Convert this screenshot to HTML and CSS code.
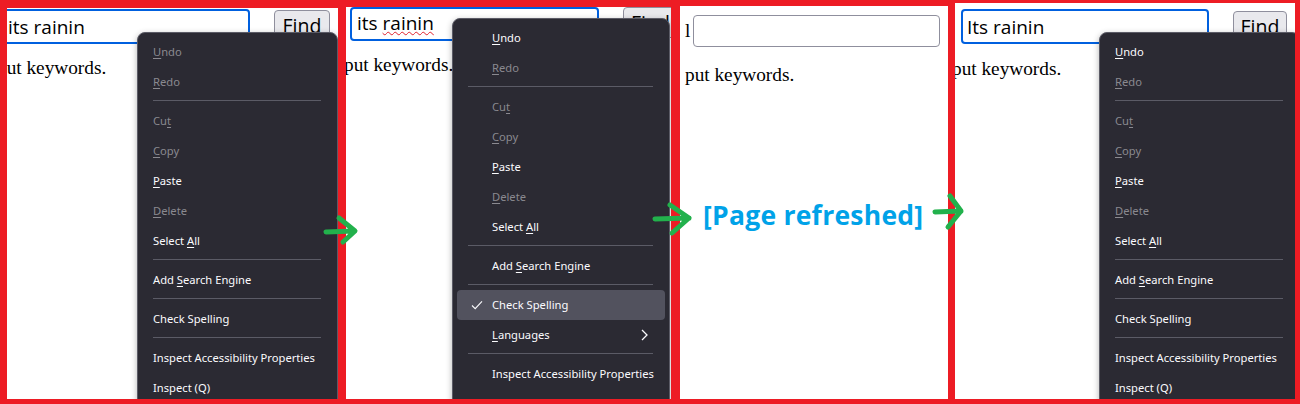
FILE: index.html
```html
<!DOCTYPE html>
<html>
<head>
<meta charset="utf-8">
<title>Spell check steps</title>
<link rel="stylesheet" href="styles.css">
</head>
<body>
<div class="strip">

	<section class="panel p1">
		<div class="bar">
			<div class="field">its rainin</div>
			<div class="find">Find</div>
		</div>
		<p class="hint">put keywords.</p>
		<ul class="menu">
			<li class="item off"><u>U</u>ndo</li>
			<li class="item off"><u>R</u>edo</li>
			<li class="sep"></li>
			<li class="item off">Cu<u>t</u></li>
			<li class="item off"><u>C</u>opy</li>
			<li class="item"><u>P</u>aste</li>
			<li class="item off"><u>D</u>elete</li>
			<li class="item">Select <u>A</u>ll</li>
			<li class="sep"></li>
			<li class="item">Add <u>S</u>earch Engine</li>
			<li class="sep"></li>
			<li class="item">Check Spelling</li>
			<li class="sep"></li>
			<li class="item">Inspect Accessibility Properties</li>
			<li class="item">Inspect (Q)</li>
		</ul>
	</section>

	<section class="panel p2">
		<div class="bar">
			<div class="field">its <span class="miss">rainin</span></div>
			<div class="find">Find</div>
		</div>
		<p class="hint">put keywords.</p>
		<ul class="menu">
			<li class="item"><u>U</u>ndo</li>
			<li class="item off"><u>R</u>edo</li>
			<li class="sep"></li>
			<li class="item off">Cu<u>t</u></li>
			<li class="item off"><u>C</u>opy</li>
			<li class="item"><u>P</u>aste</li>
			<li class="item off"><u>D</u>elete</li>
			<li class="item">Select <u>A</u>ll</li>
			<li class="sep"></li>
			<li class="item">Add <u>S</u>earch Engine</li>
			<li class="sep"></li>
			<li class="item hot">
				<svg class="tick" width="12" height="10" viewBox="0 0 12 10"><path d="M1 5.5 L4.2 8.6 L11 1.4" fill="none" stroke="#fbfbfe" stroke-width="1.1"/></svg>
				Check Spelling
			</li>
			<li class="item"><u>L</u>anguages
				<svg class="more" width="7" height="12" viewBox="0 0 7 12"><path d="M1 1 L6 6 L1 11" fill="none" stroke="#fbfbfe" stroke-width="1.3"/></svg>
			</li>
			<li class="sep"></li>
			<li class="item">Inspect Accessibility Properties</li>
			<li class="item">Inspect (Q)</li>
		</ul>
	</section>

	<section class="panel p3">
		<div class="bar">
			<span class="label">l</span>
			<div class="field blank"></div>
		</div>
		<p class="hint">put keywords.</p>
		<p class="refresh">[Page refreshed]</p>
	</section>

	<section class="panel p4">
		<div class="bar">
			<div class="field">Its rainin</div>
			<div class="find">Find</div>
		</div>
		<p class="hint">put keywords.</p>
		<ul class="menu">
			<li class="item"><u>U</u>ndo</li>
			<li class="item off"><u>R</u>edo</li>
			<li class="sep"></li>
			<li class="item off">Cu<u>t</u></li>
			<li class="item off"><u>C</u>opy</li>
			<li class="item"><u>P</u>aste</li>
			<li class="item off"><u>D</u>elete</li>
			<li class="item">Select <u>A</u>ll</li>
			<li class="sep"></li>
			<li class="item">Add <u>S</u>earch Engine</li>
			<li class="sep"></li>
			<li class="item">Check Spelling</li>
			<li class="sep"></li>
			<li class="item">Inspect Accessibility Properties</li>
			<li class="item">Inspect (Q)</li>
		</ul>
	</section>

</div>
<svg class="arrows" width="1300" height="404" viewBox="0 0 1300 404">
	<g fill="none" stroke="#22b14c" stroke-width="5" stroke-linecap="round" stroke-linejoin="round">
		<path d="M326 232 L354 231 M339 218 L355 231 L343 242"/>
		<path d="M655 219 L689 218 M670 205 L689 218 L672 233"/>
		<path d="M935 212 L961 211 M950 196 L961 211 L948 227"/>
	</g>
</svg>
</body>
</html>
```

FILE: styles.css
```css
* {
	box-sizing: border-box;
}
body {
	position: relative;
	margin: 0;
	width: 1300px;
	height: 404px;
	background: #ed1c24;
	overflow: hidden;
}
.strip {
	display: flex;
	align-items: flex-end;
	height: 399px;
	padding-left: 7px;
}
.panel {
	position: relative;
	flex: none;
	overflow: hidden;
	background: #fff;
}
.p1 { width: 331px; height: 391px; }
.p2 { width: 325px; height: 392px; margin-left: 8px; }
.p3 { width: 268px; height: 393px; margin-left: 9px; }
.p4 { width: 340px; height: 396px; margin-left: 7px; }

/* page under the menu */
.bar {
	display: flex;
	align-items: flex-start;
}
.field {
	flex: none;
	width: 248px;
	height: 35px;
	padding: 0 4px;
	border: 2px solid #0060df;
	border-radius: 4px;
	font: 19px/33px "Open Sans", sans-serif;
	color: #000;
	white-space: nowrap;
}
.field.blank {
	width: 247px;
	height: 32px;
	border: 1px solid #8f8f9d;
}
.miss {
	text-decoration: underline wavy #e0202c;
	text-decoration-thickness: 1px;
	text-underline-offset: 1px;
}
.find {
	flex: none;
	width: 55px;
	height: 31px;
	margin-left: 24px;
	border: 1px solid #8f8f9d;
	border-radius: 4px;
	background: #e9e9ed;
	font: 19.5px/29px "Open Sans", sans-serif;
	text-align: center;
	color: #000;
}
.label {
	width: 8px;
	font: 19.3px/32px "Liberation Serif", serif;
}
.hint {
	margin: 12px 0 0;
	font: 19.3px/24px "Liberation Serif", serif;
	color: #000;
	white-space: nowrap;
}
.refresh {
	margin: 110px 0 0 23px;
	font: 700 26.5px/36px "Open Sans", sans-serif;
	letter-spacing: 0.25px;
	color: #00a2e8;
	white-space: nowrap;
}

.p1 .bar { margin: 1px 0 0 -5px; }
.p1 .find { width: 56px; margin-top: 1px; }
.p1 .hint { margin-left: -10px; }
.p2 .bar { margin-left: 4px; }
.p2 .field { width: 249px; height: 34px; padding-left: 5px; line-height: 29px; }
.p2 .hint { margin-left: -2px; }
.p3 .bar { margin: 9px 0 0 5px; }
.p3 .hint { margin: 16px 0 0 5px; }
.p4 .bar { margin: 6px 0 0 6px; }
.p4 .find { width: 54px; margin-top: 2px; }
.p4 .hint { margin: 13px 0 0 -3px; }

/* context menu */
.menu {
	position: absolute;
	margin: 0;
	padding: 4px;
	list-style: none;
	background: #2b2a33;
	border: 1px solid #5b5b66;
	border-radius: 8px;
	box-shadow: 0 2px 6px rgba(0, 0, 0, 0.3);
	font: 11.2px "Noto Sans", sans-serif;
	color: #fbfbfe;
}
.p1 .menu { left: 130px; top: 24px; width: 201px; }
.p2 .menu { left: 106px; top: 11px; width: 218px; }
.p4 .menu { left: 144px; top: 29px; width: 201px; }
.item {
	position: relative;
	height: 30px;
	padding-left: 11px;
	border-radius: 4px;
	line-height: 30px;
	white-space: nowrap;
}
.item u {
	text-underline-offset: 2px;
}
.off {
	color: #8a8990;
}
.sep {
	height: 1px;
	margin: 3px 12px 5px 11px;
	background: #5b5b66;
}
.p2 .item { padding-left: 35px; }
.hot { background: #52525e; }
.tick {
	position: absolute;
	left: 14px;
	top: 10px;
}
.more {
	position: absolute;
	right: 17px;
	top: 9px;
}

.arrows {
	position: absolute;
	left: 0;
	top: 0;
	pointer-events: none;
}
```
